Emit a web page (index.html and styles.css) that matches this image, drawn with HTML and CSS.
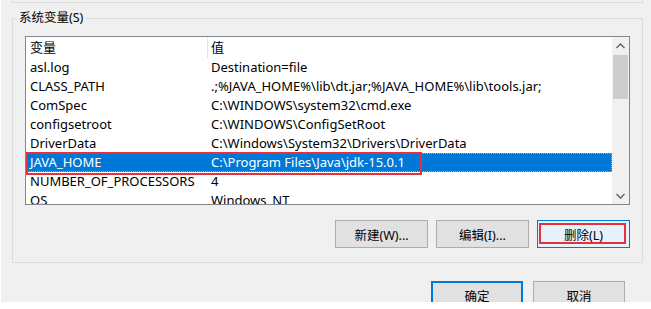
FILE: index.html
```html
<!DOCTYPE html>
<html lang="zh-CN">
<head>
  <meta charset="UTF-8" />
  <title>环境变量</title>
  <link rel="stylesheet" href="styles.css">
</head>
<body>
  <div class="dialog">
    <div class="prev-group"></div>

    <fieldset class="group">
      <legend class="group-title">系统变量(S)</legend>

      <div class="listview">
        <div class="list-body">
          <div class="list-head">
            <div class="col-name">变量</div>
            <div class="col-value">值</div>
          </div>
          <div class="list-row"><div class="col-name">asl.log</div><div class="col-value">Destination=file</div></div>
          <div class="list-row"><div class="col-name">CLASS_PATH</div><div class="col-value">.;%JAVA_HOME%\lib\dt.jar;%JAVA_HOME%\lib\tools.jar;</div></div>
          <div class="list-row"><div class="col-name">ComSpec</div><div class="col-value">C:\WINDOWS\system32\cmd.exe</div></div>
          <div class="list-row"><div class="col-name">configsetroot</div><div class="col-value">C:\WINDOWS\ConfigSetRoot</div></div>
          <div class="list-row"><div class="col-name">DriverData</div><div class="col-value">C:\Windows\System32\Drivers\DriverData</div></div>
          <div class="list-row selected">
            <div class="col-name">JAVA_HOME</div><div class="col-value">C:\Program Files\Java\jdk-15.0.1</div>
            <span class="mark mark-row"></span>
          </div>
          <div class="list-row"><div class="col-name">NUMBER_OF_PROCESSORS</div><div class="col-value">4</div></div>
          <div class="list-row"><div class="col-name">OS</div><div class="col-value">Windows_NT</div></div>
        </div>
        <div class="scrollbar">
          <div class="sb-arrow">
            <svg width="9" height="6" viewBox="0 0 9 6"><path d="M0.5 5 L4.5 1 L8.5 5" fill="none" stroke="#606060" stroke-width="1.3"/></svg>
          </div>
          <div class="sb-track"><div class="sb-thumb"></div></div>
          <div class="sb-arrow">
            <svg width="9" height="6" viewBox="0 0 9 6"><path d="M0.5 1 L4.5 5 L8.5 1" fill="none" stroke="#606060" stroke-width="1.3"/></svg>
          </div>
        </div>
      </div>

      <div class="group-buttons">
        <button class="btn">新建(W)...</button>
        <button class="btn">编辑(I)...</button>
        <button class="btn btn-focus">删除(L)<span class="mark mark-btn"></span></button>
      </div>
    </fieldset>

    <div class="dialog-buttons">
      <button class="btn btn-default">确定</button>
      <button class="btn">取消</button>
    </div>
  </div>
</body>
</html>
```

FILE: styles.css
```css
body {
  margin: 0;
  background: #ffffff;
  font-family: "Noto Sans", "Noto Sans CJK SC", sans-serif;
  font-size: 12px;
  color: #000000;
}
.dialog {
  margin-left: 1px;
  width: 650px;
  height: 302px;
  overflow: hidden;
  background: #f0f0f0;
}
.prev-group {
  height: 2px;
  margin: 0 8px 0 11px;
  border: 1px solid #dcdcdc;
  border-top: none;
}
.group {
  margin: 7px 8px 0 11px;
  padding: 0 12px 14px;
  border: 1px solid #dcdcdc;
  min-width: 0;
}
.group-title {
  margin-left: -8px;
  padding: 0 2px;
  line-height: 16px;
  font-size: 12.5px;
}
.listview {
  display: flex;
  height: 167px;
  margin-top: 10px;
  border: 1px solid #828790;
  background: #ffffff;
  font-size: 13px;
}
.list-body {
  flex: 1;
  overflow: hidden;
}
.list-head,
.list-row {
  position: relative;
  display: flex;
  height: 19px;
  line-height: 19px;
  white-space: nowrap;
}
.list-head {
  height: 21px;
  line-height: 21px;
}
.col-name {
  width: 177px;
  padding-left: 4px;
  flex-shrink: 0;
}
.col-value {
  padding-left: 4px;
}
.list-head .col-value {
  border-left: 1px solid #e5e5e5;
  padding-left: 3px;
}
.list-row.selected {
  background: #0078d7;
  color: #ffffff;
  outline: 1px dotted #f0a040;
  outline-offset: -1px;
}
.mark {
  position: absolute;
  border: 2px solid #e8303a;
  pointer-events: none;
}
.mark-row {
  left: 0;
  top: -1px;
  width: 392px;
  height: 19px;
}
.scrollbar {
  display: flex;
  flex-direction: column;
  width: 17px;
  background: #f0f0f0;
}
.sb-arrow {
  display: flex;
  align-items: center;
  justify-content: center;
  height: 17px;
}
.sb-track {
  flex: 1;
  padding: 1px 0 0 1px;
}
.sb-thumb {
  width: 15px;
  height: 44px;
  background: #cdcdcd;
}
.group-buttons {
  display: flex;
  justify-content: flex-end;
  gap: 8px;
  margin-top: 15px;
}
.btn {
  position: relative;
  width: 93px;
  height: 28px;
  padding: 0;
  background: #e1e1e1;
  border: 1px solid #adadad;
  font-family: "Noto Sans", "Noto Sans CJK SC", sans-serif;
  font-size: 12.5px;
  color: #000000;
}
.btn-focus {
  background: #e5f1fb;
  border-color: #0078d7;
}
.mark-btn {
  left: 1px;
  top: 2px;
  right: 3px;
  bottom: 3px;
}
.btn-default {
  border: 2px solid #0078d7;
}
.dialog-buttons {
  display: flex;
  justify-content: flex-end;
  gap: 10px;
  margin: 18px 26px 0 0;
}
.dialog-buttons .btn {
  width: 92px;
  height: 28px;
}
```
